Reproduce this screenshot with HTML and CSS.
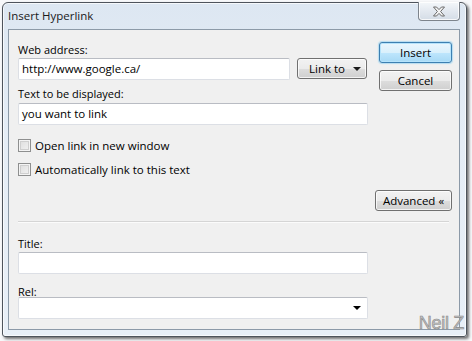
FILE: index.html
```html
<!DOCTYPE html>
<html>
<head>
<meta charset="utf-8">
<link rel="stylesheet" href="styles.css">
</head>
<body>
<div class="window">
  <div class="titlebar">
    <span class="title">Insert Hyperlink</span>
    <div class="close">
      <svg width="14" height="11" viewBox="0 0 14 11"><path d="M1.5 1h3l2.5 2.6L9.5 1h3L8.6 5.5l3.9 4.5h-3L7 7.4 4.5 10h-3l3.9-4.5z" fill="#f4f4f4" stroke="#6a6a6a" stroke-width="1" stroke-linejoin="round"/></svg>
    </div>
  </div>
  <div class="client">
    <div class="top">
      <div class="form">
        <div class="label">Web address:</div>
        <div class="addr-row">
          <div class="input addr">http://www.google.ca/</div>
          <div class="btn linkto"><span>Link to</span><span class="tri"></span></div>
        </div>
        <div class="label gap6 tight">Text to be displayed:</div>
        <div class="input">you want to link</div>
        <div class="check first"><span class="box"></span><span>Open link in new window</span></div>
        <div class="check"><span class="box"></span><span>Automatically link to this text</span></div>
      </div>
      <div class="actions">
        <div class="btn primary">Insert</div>
        <div class="btn cancel">Cancel</div>
      </div>
    </div>
    <div class="adv-row"><div class="btn adv">Advanced «</div></div>
    <div class="sep"></div>
    <div class="lower">
      <div class="label">Title:</div>
      <div class="input"></div>
      <div class="label rel">Rel:</div>
      <div class="input select"><span class="tri"></span></div>
    </div>
  </div>
</div>
<div class="watermark">Neil Z</div>
</body>
</html>
```
FILE: styles.css
```css
html, body {
  margin: 0;
  padding: 0;
}
body {
  width: 472px;
  height: 341px;
  overflow: hidden;
  background: #f7f8fa;
  font-family: "Open Sans", "Noto Sans", sans-serif;
  font-size: 11px;
  color: #000;
  position: relative;
}
.window {
  margin: 2px 0 0 2px;
  width: 465px;
  height: 335px;
  box-sizing: border-box;
  border: 1px solid #4e545c;
  border-radius: 6px 6px 3px 3px;
  background: linear-gradient(180deg, #dde7f2 0%, #e5edf6 40%, #e8eff7 100%);
  box-shadow: inset 0 0 0 1px rgba(255,255,255,0.7), 2px 2px 3px rgba(0,0,0,0.55);
  display: flex;
  flex-direction: column;
}
.titlebar {
  height: 26px;
  display: flex;
  align-items: flex-start;
  padding-left: 5px;
  flex: none;
}
.title {
  margin-top: 5px;
  font-size: 11.5px;
  line-height: 15px;
  color: #1a1a1a;
}
.close {
  margin-left: auto;
  margin-right: 6px;
  margin-top: -1px;
  width: 42px;
  height: 19px;
  box-sizing: border-box;
  border: 1px solid #7d848c;
  border-top: none;
  border-radius: 0 0 4px 4px;
  background: linear-gradient(180deg, #f4f7fa 0%, #e3e9f0 50%, #d4dce6 100%);
  box-shadow: inset 0 0 0 1px rgba(255,255,255,0.8);
  display: flex;
  align-items: center;
  justify-content: center;
}
.close svg { display: block; margin-top: 1px; }
.client {
  flex: 1;
  margin: 0 6px 6px 5px;
  border: 1px solid #8c9aa8;
  background: #f0f0f0;
  padding: 12px 7px 0 9px;
  display: flex;
  flex-direction: column;
}
.top {
  display: flex;
  gap: 11px;
}
.form {
  width: 350px;
  display: flex;
  flex-direction: column;
}
.label {
  line-height: 15px;
  height: 15px;
  margin-bottom: 1px;
  white-space: nowrap;
}
.label.gap6 { margin-top: 6px; }
.label.tight { margin-bottom: 2px; }
.label.rel { margin-top: 10px; margin-bottom: -2px; }
.addr-row {
  display: flex;
  align-items: flex-start;
  gap: 7px;
}
.input {
  height: 22px;
  box-sizing: border-box;
  background: #fff;
  border: 1px solid #dcdfe5;
  border-top-color: #b9bcc3;
  border-radius: 2px;
  padding: 0 3px;
  line-height: 20px;
  font-size: 11.5px;
  white-space: nowrap;
}
.input.addr { width: 272px; }
.btn {
  height: 21px;
  box-sizing: border-box;
  border: 1px solid #707070;
  border-radius: 3px;
  background: linear-gradient(180deg, #f2f2f2 0%, #ebebeb 50%, #dddddd 51%, #cfcfcf 100%);
  box-shadow: inset 0 0 0 1px rgba(255,255,255,0.75);
  display: flex;
  align-items: center;
  justify-content: center;
  line-height: 15px;
  font-size: 11.5px;
  color: #000;
  white-space: nowrap;
}
.btn.linkto {
  width: 70px;
  justify-content: flex-start;
  padding-left: 11px;
}
.tri {
  width: 0;
  height: 0;
  border-left: 4px solid transparent;
  border-right: 4px solid transparent;
  border-top: 4px solid #1a1a1a;
  flex: none;
}
.btn.linkto .tri { margin-left: auto; margin-right: 5px; margin-top: 1px; }
.check {
  display: flex;
  align-items: center;
  gap: 4px;
  height: 13px;
  line-height: 13px;
  margin-top: 11px;
  font-size: 11.5px;
  white-space: nowrap;
}
.check.first { margin-top: 14px; }
.box {
  width: 13px;
  height: 13px;
  box-sizing: border-box;
  border: 1px solid #8e8f8f;
  background: linear-gradient(135deg, #dcdcdc 0%, #f4f4f4 100%);
  box-shadow: inset 0 0 0 1px #f4f4f4, inset 0 0 0 2px #cfcfcf;
  flex: none;
}
.actions {
  width: 73px;
  display: flex;
  flex-direction: column;
  gap: 7px;
}
.btn.primary {
  border-color: #3c7fb1;
  background: linear-gradient(180deg, #eaf6fd 0%, #d9f0fc 50%, #bee6fd 51%, #a7d9f5 100%);
  box-shadow: inset 0 0 0 1px #b5e3fb, 0 0 1px 1px rgba(72,182,240,0.35);
}
.adv-row {
  display: flex;
  justify-content: flex-end;
  margin-top: 14px;
}
.btn.adv { width: 77px; }
.sep {
  height: 1px;
  background: #d5d5d5;
  margin: 10px 3px 0 0;
  border-bottom: 1px solid #fbfbfb;
}
.lower {
  width: 350px;
  display: flex;
  flex-direction: column;
  margin-top: 13px;
}
.input.select {
  display: flex;
  align-items: center;
  justify-content: flex-end;
  padding-right: 6px;
}
.input.select .tri { border-top-color: #000; }
.watermark {
  position: absolute;
  right: 8px;
  bottom: 9px;
  font-family: "Liberation Sans", Arial, sans-serif;
  font-size: 18px;
  line-height: 18px;
  color: #c4c4c4;
  -webkit-text-stroke: 0.6px #8a8a8a;
  letter-spacing: -0.3px;
}
```
